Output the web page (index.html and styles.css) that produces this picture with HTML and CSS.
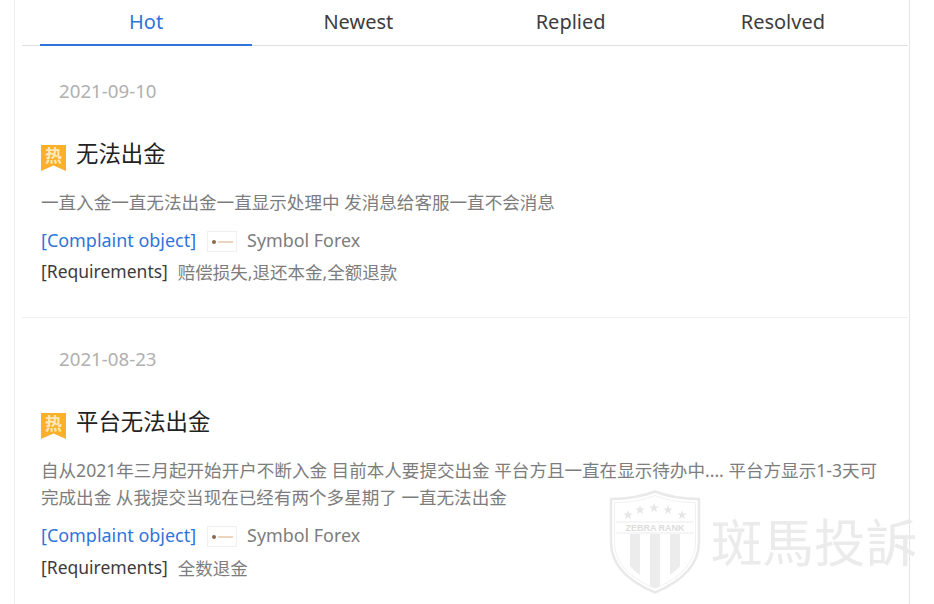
FILE: index.html
```html
<!DOCTYPE html>
<html lang="zh">
<head>
<meta charset="utf-8">
<title>Complaints</title>
<link rel="stylesheet" href="styles.css">
</head>
<body>
<main class="card">
  <nav class="tabs">
    <a class="tab active">Hot</a>
    <a class="tab">Newest</a>
    <a class="tab">Replied</a>
    <a class="tab">Resolved</a>
  </nav>
  <article class="item first">
    <div class="date">2021-09-10</div>
    <h2 class="title"><span class="hot"><svg class="hot-bg" viewBox="0 0 25 26"><path d="M0 0H25V26L12.500 20.500L0 26Z" fill="#fbb02a"/></svg><span class="hot-text">热</span></span>无法出金</h2>
    <p class="desc">一直入金一直无法出金一直显示处理中 发消息给客服一直不会消息</p>
    <div class="row"><span class="label-link">[Complaint object]</span><span class="logo"><i class="logo-dot"></i><i class="logo-line"></i></span><span class="muted latin">Symbol Forex</span></div>
    <div class="row req"><span class="label">[Requirements]</span><span class="muted">赔偿损失,退还本金,全额退款</span></div>
  </article>
  <article class="item">
    <div class="date">2021-08-23</div>
    <h2 class="title"><span class="hot"><svg class="hot-bg" viewBox="0 0 25 26"><path d="M0 0H25V26L12.500 20.500L0 26Z" fill="#fbb02a"/></svg><span class="hot-text">热</span></span>平台无法出金</h2>
    <p class="desc">自从2021年三月起开始开户不断入金 目前本人要提交出金 平台方且一直在显示待办中.... 平台方显示1-3天可完成出金 从我提交当现在已经有两个多星期了 一直无法出金</p>
    <div class="row"><span class="label-link">[Complaint object]</span><span class="logo"><i class="logo-dot"></i><i class="logo-line"></i></span><span class="muted latin">Symbol Forex</span></div>
    <div class="row req"><span class="label">[Requirements]</span><span class="muted">全数退金</span></div>
  </article>
</main>
<aside class="watermark">
  <svg class="shield" viewBox="0 0 92 104">
    <defs><path id="star" d="M0-5L1.200-1.600H4.800L1.900.6L3 4L0 2L-3 4L-1.900.6L-4.800-1.600H-1.200Z"/></defs>
    <path d="M46 1.500C60 7 74 9 90 9V52C90 76 71 92 46 102.500C21 92 2 76 2 52V9C18 9 32 7 46 1.500Z" fill="#fff" stroke="#e9e9e9" stroke-width="2.500"/>
    <path d="M46 5.500C59 10.500 72 12.500 86.500 12.500V52C86.500 74 69 89 46 98.500C23 89 5.500 74 5.500 52V12.500C20 12.500 33 10.500 46 5.500Z" fill="none" stroke="#f1f1f1" stroke-width="1"/>
    <path d="M21 44H31V85Q25 81 21 76ZM41 44H51V96L46 98L41 96ZM61 44H71V76Q67 81 61 85Z" fill="#ececec"/>
    <path d="M7 32H85M7 43H85" stroke="#ececec" stroke-width="1"/>
    <text x="46" y="41" text-anchor="middle" class="shield-text">ZEBRA RANK</text>
    <g fill="#e6e6e6">
      <use href="#star" x="19" y="25"/>
      <use href="#star" x="31" y="20"/>
      <use href="#star" x="45" y="18"/>
      <use href="#star" x="59" y="20"/>
      <use href="#star" x="73" y="25"/>
    </g>
  </svg>
  <span class="wm-text">斑馬投訴</span>
</aside>
</body>
</html>
```
FILE: styles.css
```css
* { box-sizing: border-box; }
html, body { margin: 0; padding: 0; }
body {
  width: 934px;
  height: 604px;
  overflow: hidden;
  background: #fff;
  position: relative;
  font-family: "Noto Sans", "Noto Sans CJK SC", sans-serif;
  color: #333;
}
.card {
  margin-left: 14px;
  width: 896px;
  height: 604px;
  border-left: 1px solid #efefef;
  border-right: 1px solid #e6e6e6;
  padding: 0 1px 0 7px;
}
.tabs {
  display: flex;
  height: 46px;
  padding: 0 19px 0 18px;
  border-bottom: 1px solid #dfdfdf;
}
.tab {
  flex: 1;
  height: 46px;
  line-height: 43px;
  text-align: center;
  font-size: 20px;
  color: #3d3d3d;
}
.tab.active {
  color: #2f74dc;
  border-bottom: 2px solid #2f74dc;
}
.item {
  height: 272px;
  padding: 0 19px;
  border-bottom: 1px solid #efefef;
}
.item.first { padding-top: 4px; }
.item:not(.first) { height: auto; border-bottom: 0; }
.date {
  margin-left: 18px;
  padding-top: 28px;
  height: 56px;
  line-height: 26px;
  font-size: 18.700px;
  color: #b0b0b0;
}
.title {
  display: flex;
  align-items: center;
  margin: 26px 0 0;
  height: 40px;
  font-size: 22.400px;
  font-weight: 400;
  color: #222;
}
.hot {
  position: relative;
  display: block;
  width: 25px;
  height: 26px;
  margin-right: 10px;
  margin-top: 12px;
  flex: none;
}
.hot-bg {
  display: block;
  width: 25px;
  height: 26px;
}
.hot-text {
  position: absolute;
  left: 0;
  top: 0;
  width: 25px;
  height: 21px;
  line-height: 21px;
  text-align: center;
  font-size: 17px;
  font-weight: 700;
  color: #fde9bd;
}
.desc {
  margin: 17px 0 0;
  font-size: 17.570px;
  line-height: 27px;
  color: #7d7d7d;
  width: 850px;
}
.row {
  display: flex;
  align-items: center;
  height: 32px;
  margin-top: 8px;
  font-size: 17.500px;
}
.req { margin-top: 0; }
.first .req { margin-top: -1px; }
.label-link { color: #2f74dc; font-size: 17.950px; }
.label { color: #3c3c3c; margin-right: 10px; }
.muted { color: #7d7d7d; }
.latin { font-size: 17.900px; }
.logo {
  display: flex;
  align-items: center;
  justify-content: center;
  gap: 2px;
  width: 30px;
  height: 21px;
  margin: 3px 10px 0 11px;
  border: 1px solid #efefef;
}
.logo-dot { width: 4px; height: 4px; background: #8a6a4a; border-radius: 50%; }
.logo-line { width: 15px; height: 2px; background: #ecd4bf; }
.watermark {
  position: absolute;
  left: 609px;
  top: 490px;
  display: flex;
  align-items: center;
  pointer-events: none;
}
.shield { width: 92px; height: 104px; flex: none; }
.shield-text {
  font-family: "Liberation Sans", sans-serif;
  font-size: 9px;
  font-weight: 700;
  fill: #dcdcdc;
}
.wm-text {
  margin-left: 10px;
  margin-top: -4px;
  font-size: 51.500px;
  line-height: 54px;
  white-space: nowrap;
  color: #ebebeb;
  font-family: "Noto Sans CJK TC", sans-serif;
}
```
